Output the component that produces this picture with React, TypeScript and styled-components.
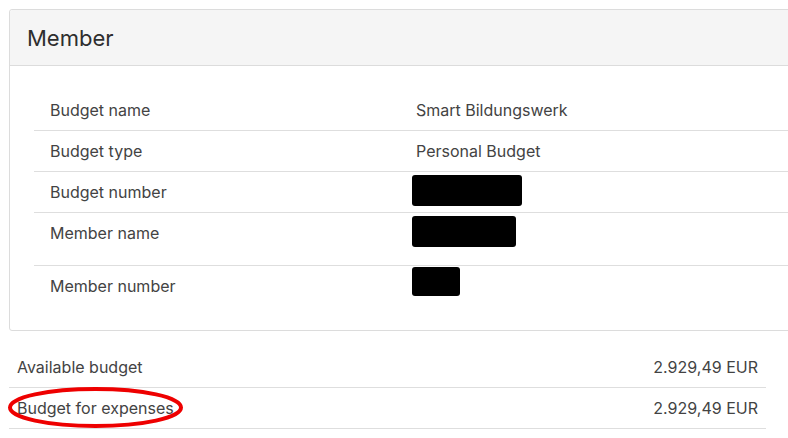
import React from "react";
import styled, { createGlobalStyle } from "styled-components";

const GlobalStyle = createGlobalStyle`
  html, body {
    margin: 0;
    padding: 0;
    background: #ffffff;
    overflow: hidden;
  }
  body {
    font-family: Inter, "Noto Sans", sans-serif;
    color: #434343;
  }
`;

const Page = styled.div`
  padding: 9px 0 0 9px;
  width: 820px;
`;

const Card = styled.section`
  width: 810px;
  border: 1px solid #dcdcdc;
  border-radius: 3px;
  background: #fff;
`;

const CardHeader = styled.header`
  height: 55px;
  display: flex;
  align-items: center;
  padding: 0 17px;
  background: #f5f5f5;
  border-bottom: 1px solid #dcdcdc;
  border-radius: 3px 3px 0 0;
`;

const Title = styled.h2`
  margin: 0;
  font-size: 22px;
  font-weight: 400;
  color: #2e2e2e;
`;

const CardBody = styled.div`
  padding: 24px 24px 24px 24px;
`;

const Row = styled.div<{ $height?: number; $last?: boolean }>`
  display: grid;
  grid-template-columns: 366px 1fr;
  height: ${p => p.$height ?? 40}px;
  border-bottom: ${p => (p.$last ? "none" : "1px solid #dedede")};
  font-size: 16px;
  line-height: 18px;
`;

const Cell = styled.div`
  position: relative;
  padding: 11px 16px 13px;
`;

const Redacted = styled.span<{ $w: number; $h: number; $top: number }>`
  position: absolute;
  left: 12px;
  top: ${p => p.$top}px;
  width: ${p => p.$w}px;
  height: ${p => p.$h}px;
  background: #000;
  border-radius: 3px;
`;

const Summary = styled.div`
  width: 757px;
  margin-top: 16px;
`;

const SummaryRow = styled.div`
  display: flex;
  justify-content: space-between;
  align-items: center;
  height: 40px;
  padding: 0 8px;
  border-bottom: 1px solid #dedede;
  font-size: 16px;
`;

const Label = styled.span`
  position: relative;
`;

const Circle = styled.svg`
  position: absolute;
  left: -9px;
  top: -11px;
  overflow: visible;
`;

type Info = { label: string; value?: string; redact?: [number, number, number]; height?: number };

const rows: Info[] = [
  { label: "Budget name", value: "Smart Bildungswerk" },
  { label: "Budget type", value: "Personal Budget" },
  { label: "Budget number", redact: [110, 31, 3] },
  { label: "Member name", redact: [104, 31, 3], height: 52 },
  { label: "Member number", redact: [48, 29, 1] },
];

export default function App() {
  return (
    <Page>
      <GlobalStyle />
      <Card>
        <CardHeader>
          <Title>Member</Title>
        </CardHeader>
        <CardBody>
          {rows.map((r, i) => (
            <Row key={r.label} $height={r.height} $last={i === rows.length - 1}>
              <Cell>{r.label}</Cell>
              <Cell>
                {r.value}
                {r.redact && <Redacted $w={r.redact[0]} $h={r.redact[1]} $top={r.redact[2]} />}
              </Cell>
            </Row>
          ))}
        </CardBody>
      </Card>
      <Summary>
        <SummaryRow>
          <span>Available budget</span>
          <span>2.929,49 EUR</span>
        </SummaryRow>
        <SummaryRow>
          <Label>
            Budget for expenses
            <Circle width="175" height="41" viewBox="0 0 175 41">
              <ellipse cx="87.5" cy="20.5" rx="85.5" ry="18.5" fill="none" stroke="#ee0000" strokeWidth="4" />
            </Circle>
          </Label>
          <span>2.929,49 EUR</span>
        </SummaryRow>
      </Summary>
    </Page>
  );
}
